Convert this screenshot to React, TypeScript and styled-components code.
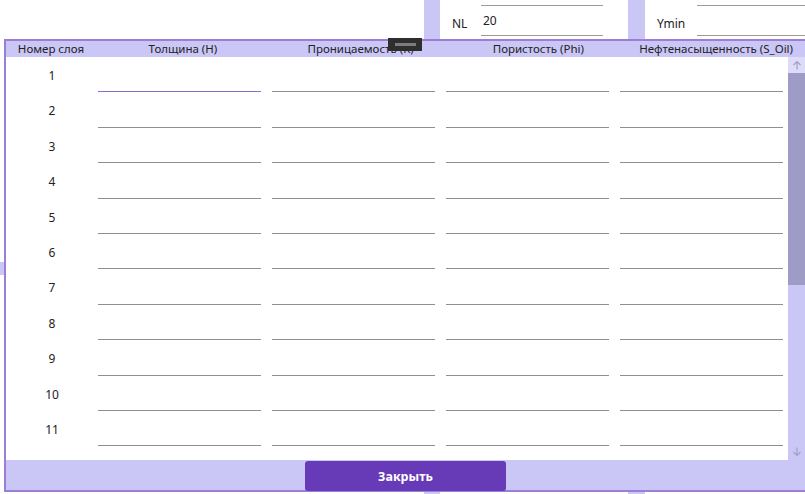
import React from 'react';
import styled, { createGlobalStyle } from 'styled-components';

const GlobalStyle = createGlobalStyle`
  html, body {
    margin: 0;
    padding: 0;
    width: 805px;
    height: 494px;
    overflow: hidden;
    background: #ffffff;
    font-family: "Noto Sans", "Segoe UI", sans-serif;
    color: #222222;
  }
`;

const lavender = '#cac6f6';
const purple = '#673ab7';

const Page = styled('div')`
  position: relative;
  width: 805px;
  height: 494px;
  overflow: hidden;
`;

const Backdrop = styled('div')`
  display: flex;
  height: 100%;
`;

const LeftArea = styled('div')`
  width: 424px;
  display: flex;
  flex-direction: column;
  padding-top: 262px;
`;

const SideTab = styled('div')`
  width: 4px;
  height: 13px;
  background: ${lavender};
`;

const Panel = styled('div')<{ $width: number }>`
  display: flex;
  width: ${(p) => p.$width}px;
  flex-shrink: 0;
`;

const Strip = styled('div')<{ $width: number }>`
  width: ${(p) => p.$width}px;
  background: ${lavender};
  flex-shrink: 0;
`;

const Fields = styled('div')`
  flex: 1;
  margin-top: -24px;
`;

const Field = styled('div')<{ $labelWidth: number }>`
  display: grid;
  grid-template-columns: ${(p) => p.$labelWidth}px 1fr;
  height: 30px;
  padding-left: 12px;
`;

const FieldLabel = styled('span')`
  font-size: 12px;
  align-self: center;
  padding-top: 4px;
`;

const FieldInput = styled('div')<{ $right: number }>`
  border-bottom: 1px solid #9a9a9a;
  margin-right: ${(p) => p.$right}px;
  font-size: 12px;
  display: flex;
  align-items: center;
  padding-left: 2px;
`;

const Dialog = styled('div')`
  position: absolute;
  left: 4px;
  top: 39px;
  width: 799px;
  height: 449px;
  border: 2px solid #9b7fd6;
  display: flex;
  flex-direction: column;
  background: #ffffff;
`;

const Header = styled('div')`
  display: grid;
  grid-template-columns: 88px repeat(4, 1fr);
  height: 16px;
  background: ${lavender};
  font-size: 11.5px;
  line-height: 16px;
`;

const HeadCell = styled('div')<{ $first?: boolean }>`
  text-align: center;
  white-space: nowrap;
  ${(p) => (p.$first ? 'padding-left: 2px;' : '')}
`;

const Splitter = styled('div')`
  position: absolute;
  left: 382px;
  top: -3px;
  width: 34px;
  height: 13px;
  background: #2e2e2e;
  display: flex;
  align-items: center;
  justify-content: center;
`;

const SplitterGrip = styled('div')`
  width: 21px;
  height: 3px;
  background: #7c7c7c;
`;

const Body = styled('div')`
  display: flex;
  height: 403px;
`;

const Rows = styled('div')`
  flex: 1;
  overflow: hidden;
`;

const Row = styled('div')`
  display: grid;
  grid-template-columns: 86px repeat(4, 174px);
  height: 35.4px;
`;

const Num = styled('div')`
  font-size: 12px;
  line-height: 16px;
  text-align: center;
  padding-top: 11px;
  padding-left: 6px;
`;

const Cell = styled('div')<{ $focused?: boolean }>`
  margin: 0 5px 0 6px;
  border-bottom: 1px solid ${(p) => (p.$focused ? '#8c6cc6' : '#8f8f8f')};
`;

const Scrollbar = styled('div')`
  width: 17px;
  display: flex;
  flex-direction: column;
  background: ${lavender};
`;

const ScrollButton = styled('div')<{ $light?: boolean }>`
  height: 16px;
  background: ${(p) => (p.$light ? '#dedbf8' : lavender)};
  display: flex;
  align-items: center;
  justify-content: center;
  color: #a2a0c6;
`;

const Thumb = styled('div')`
  height: 212px;
  background: #9e9bc6;
`;

const Track = styled('div')`
  flex: 1;
`;

const Footer = styled('div')`
  height: 30px;
  background: ${lavender};
  display: flex;
  justify-content: center;
  align-items: flex-start;
  padding-top: 1px;
  box-sizing: border-box;
`;

const CloseButton = styled('button')`
  width: 201px;
  height: 30px;
  border: none;
  border-radius: 3px;
  background: ${purple};
  color: #ffffff;
  font-family: "Noto Sans", sans-serif;
  font-weight: bold;
  font-size: 12.5px;
  padding: 0;
`;

const Arrow: React.FC<{ up?: boolean }> = ({ up }) => (
  <svg width="10" height="10" viewBox="0 0 10 10" fill="none" stroke="currentColor" strokeWidth="1.2">
    {up ? (
      <path d="M5 9.5V1.5M1.5 5L5 1.5L8.5 5" />
    ) : (
      <path d="M5 0.5V8.5M1.5 5L5 8.5L8.5 5" />
    )}
  </svg>
);

const columns = [
  'Толщина (H)',
  'Проницаемость (K)',
  'Пористость (Phi)',
  'Нефтенасыщенность (S_Oil)',
];

const layers = Array.from({ length: 12 }, (_, i) => i + 1);

const App: React.FC = () => {
  return (
    <Page>
      <GlobalStyle />
      <Backdrop>
        <LeftArea>
          <SideTab />
        </LeftArea>
        <Panel $width={204}>
          <Strip $width={16} />
          <Fields>
            <Field $labelWidth={29}>
              <FieldLabel />
              <FieldInput $right={25} />
            </Field>
            <Field $labelWidth={29}>
              <FieldLabel>NL</FieldLabel>
              <FieldInput $right={25}>20</FieldInput>
            </Field>
          </Fields>
        </Panel>
        <Panel $width={177}>
          <Strip $width={17} />
          <Fields>
            <Field $labelWidth={40}>
              <FieldLabel />
              <FieldInput $right={-20} />
            </Field>
            <Field $labelWidth={40}>
              <FieldLabel>Ymin</FieldLabel>
              <FieldInput $right={-20} />
            </Field>
          </Fields>
        </Panel>
      </Backdrop>

      <Dialog>
        <Header>
          <HeadCell $first>Номер слоя</HeadCell>
          {columns.map((c) => (
            <HeadCell key={c}>{c}</HeadCell>
          ))}
        </Header>
        <Splitter>
          <SplitterGrip />
        </Splitter>
        <Body>
          <Rows>
            {layers.map((n) => (
              <Row key={n}>
                <Num>{n}</Num>
                {columns.map((c, i) => (
                  <Cell key={c} $focused={n === 1 && i === 0} />
                ))}
              </Row>
            ))}
          </Rows>
          <Scrollbar>
            <ScrollButton $light>
              <Arrow up />
            </ScrollButton>
            <Thumb />
            <Track />
            <ScrollButton>
              <Arrow />
            </ScrollButton>
          </Scrollbar>
        </Body>
        <Footer>
          <CloseButton>Закрыть</CloseButton>
        </Footer>
      </Dialog>
    </Page>
  );
};

export default App;
